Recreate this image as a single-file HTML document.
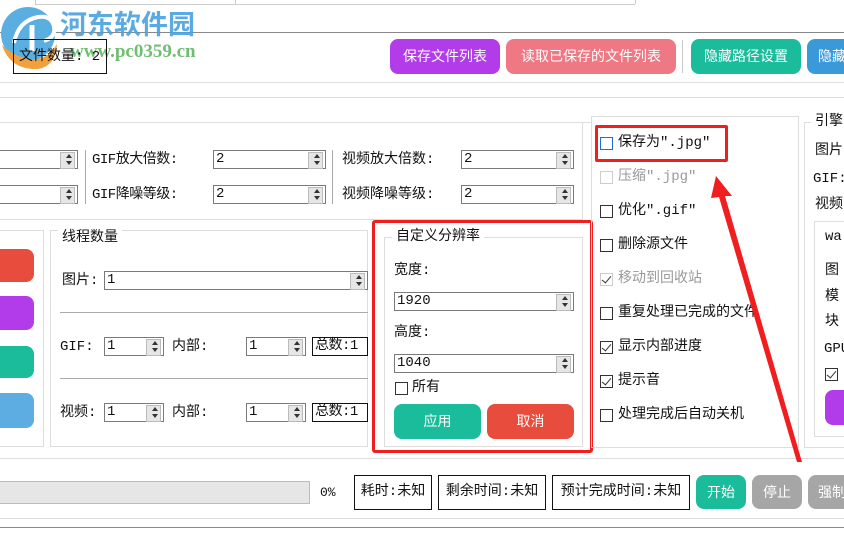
<!DOCTYPE html>
<html><head><meta charset="utf-8"><style>
*{margin:0;padding:0;box-sizing:border-box}
body{width:844px;height:535px;overflow:hidden;background:#fff;position:relative;font-family:"Liberation Mono","Noto Sans CJK SC",monospace;font-size:14px;color:#111}
.a{position:absolute}
.t{position:absolute;white-space:nowrap;line-height:16px}
.hl{position:absolute;height:1px;background:#ddd}
.btn{position:absolute;border-radius:8px;color:#fff;text-align:center;font-size:14px;font-family:"Liberation Sans","Noto Sans CJK SC",sans-serif}
.sp{position:absolute;border:1px solid #7a7a7a;background:#fff;height:19px;font-size:14px;line-height:17px;padding-left:2px}
.sp:after{content:"";position:absolute;right:2px;top:1px;width:13px;height:15px;background:#e6e6e6;border:1px solid #bbb}
.sp i{position:absolute;right:5px;top:3px;width:0;height:0;border-left:3.5px solid transparent;border-right:3.5px solid transparent;border-bottom:4px solid #333;z-index:2}
.sp b{position:absolute;right:5px;top:10px;width:0;height:0;border-left:3.5px solid transparent;border-right:3.5px solid transparent;border-top:4px solid #333;z-index:2}
.grp{position:absolute;border:1px solid #ddd}
.cb{position:absolute;width:13px;height:13px;border:1px solid #333;background:#fff}
.ck:after{content:"";position:absolute;left:3px;top:0px;width:4px;height:8px;border:solid #333;border-width:0 1.5px 1.5px 0;transform:rotate(40deg)}
.box{position:absolute;border:1px solid #111;height:35px;line-height:33px;text-align:center}
</style></head><body>
<div class="hl" style="left:35px;top:4px;width:600px;background:#ccc"></div>
<div class="a" style="left:35px;top:0;width:1px;height:4px;background:#ccc"></div>
<div class="a" style="left:235px;top:0;width:1px;height:4px;background:#ccc"></div>
<div class="a" style="left:635px;top:0;width:1px;height:4px;background:#ccc"></div>
<div class="hl" style="left:0;top:32px;width:844px;background:#888"></div>
<svg class="a" style="left:0;top:5px" width="60" height="66"><path d="M28 2a27 27 0 1 0 0.1 0z" fill="#5aaee0"/><path d="M2 40q8 25 36 24q18-3 19-25q-12 20-33 14q-13-4-22-13z" fill="#f2a03c"/><path d="M14 38q4-22 24-26q14-2 16 10q2 10-10 14" stroke="#fff" stroke-width="4" fill="none"/><path d="M32 20v26" stroke="#fff" stroke-width="5"/></svg>
<div class="t" style="left:60px;top:8px;font-size:27px;line-height:30px;font-weight:bold;color:#4aa3df;font-family:'Noto Sans CJK SC',sans-serif;opacity:.9">河东软件园</div>
<div class="t" style="left:70px;top:42px;font-size:19px;line-height:20px;font-weight:bold;color:#4caf50;font-family:'Liberation Serif',serif;opacity:.8">www.pc0359.cn</div>
<div class="a" style="left:13px;top:39px;width:94px;height:35px;border:1px solid #111"></div>
<div class="t" style="left:19px;top:49px">文件数量: 2</div>
<div class="btn" style="left:390px;top:39px;width:110px;height:35px;line-height:35px;background:#b23ce9">保存文件列表</div>
<div class="btn" style="left:506px;top:39px;width:170px;height:35px;line-height:35px;background:#ee7883">读取已保存的文件列表</div>
<div class="a" style="left:682px;top:40px;width:1px;height:33px;background:#ccc"></div>
<div class="btn" style="left:691px;top:39px;width:110px;height:35px;line-height:35px;background:#1abc9c">隐藏路径设置</div>
<div class="btn" style="left:807px;top:39px;width:60px;height:35px;line-height:35px;background:#3a9ad9;text-align:left;padding-left:11px">隐藏</div>
<div class="hl" style="left:0;top:82px;width:844px"></div>
<div class="hl" style="left:0;top:97px;width:844px"></div>
<div class="hl" style="left:0;top:122px;width:591px"></div>
<div class="grp" style="left:-2px;top:122px;width:585px;height:98px;border-top:none"></div>
<div class="sp" style="left:-2px;top:150px;width:80px"><i></i><b></b></div>
<div class="sp" style="left:-2px;top:185px;width:80px"><i></i><b></b></div>
<div class="a" style="left:85px;top:150px;width:1px;height:54px;background:#aaa"></div>
<div class="t" style="left:92px;top:152px;letter-spacing:-0.5px">GIF放大倍数:</div>
<div class="t" style="left:92px;top:187px;letter-spacing:-0.5px">GIF降噪等级:</div>
<div class="sp" style="left:213px;top:150px;width:113px">2<i></i><b></b></div>
<div class="sp" style="left:213px;top:185px;width:113px">2<i></i><b></b></div>
<div class="a" style="left:332px;top:150px;width:1px;height:54px;background:#aaa"></div>
<div class="t" style="left:342px;top:152px">视频放大倍数:</div>
<div class="t" style="left:342px;top:187px">视频降噪等级:</div>
<div class="sp" style="left:461px;top:150px;width:113px">2<i></i><b></b></div>
<div class="sp" style="left:461px;top:185px;width:113px">2<i></i><b></b></div>
<div class="grp" style="left:-2px;top:230px;width:46px;height:217px"></div>
<div class="btn" style="left:-10px;top:249px;width:44px;height:33px;background:#e74c3c"></div>
<div class="btn" style="left:-10px;top:296px;width:44px;height:34px;background:#b23ce9"></div>
<div class="btn" style="left:-10px;top:346px;width:44px;height:32px;background:#1abc9c"></div>
<div class="btn" style="left:-10px;top:393px;width:44px;height:35px;background:#5dade2"></div>
<div class="grp" style="left:50px;top:230px;width:318px;height:217px"></div>
<div class="t" style="left:58px;top:230px;background:#fff;padding:0 4px">线程数量</div>
<div class="t" style="left:62px;top:273px">图片:</div>
<div class="sp" style="left:104px;top:271px;width:264px">1<i></i><b></b></div>
<div class="hl" style="left:60px;top:312px;width:308px;background:#aaa"></div>
<div class="t" style="left:60px;top:339px">GIF:</div>
<div class="sp" style="left:104px;top:337px;width:60px">1<i></i><b></b></div>
<div class="t" style="left:172px;top:339px">内部:</div>
<div class="sp" style="left:246px;top:337px;width:60px">1<i></i><b></b></div>
<div class="a" style="left:312px;top:337px;width:56px;height:19px;border:1px solid #111;line-height:17px;padding-left:2px;letter-spacing:-0.5px">总数:1</div>
<div class="hl" style="left:60px;top:378px;width:308px;background:#aaa"></div>
<div class="t" style="left:60px;top:405px">视频:</div>
<div class="sp" style="left:104px;top:403px;width:60px">1<i></i><b></b></div>
<div class="t" style="left:172px;top:405px">内部:</div>
<div class="sp" style="left:246px;top:403px;width:60px">1<i></i><b></b></div>
<div class="a" style="left:312px;top:403px;width:56px;height:19px;border:1px solid #111;line-height:17px;padding-left:2px;letter-spacing:-0.5px">总数:1</div>
<div class="grp" style="left:384px;top:237px;width:199px;height:210px"></div>
<div class="t" style="left:392px;top:229px;background:#fff;padding:0 4px">自定义分辨率</div>
<div class="t" style="left:394px;top:263px">宽度:</div>
<div class="sp" style="left:394px;top:292px;width:180px">1920<i></i><b></b></div>
<div class="t" style="left:394px;top:325px">高度:</div>
<div class="sp" style="left:394px;top:354px;width:180px">1040<i></i><b></b></div>
<div class="cb" style="left:395px;top:382px"></div>
<div class="t" style="left:412px;top:380px">所有</div>
<div class="btn" style="left:394px;top:404px;width:87px;height:35px;line-height:35px;background:#1abc9c">应用</div>
<div class="btn" style="left:487px;top:404px;width:87px;height:35px;line-height:35px;background:#e74c3c">取消</div>
<div class="a" style="left:372px;top:220px;width:221px;height:233px;border:3px solid #f01e1e;border-radius:3px"></div>
<div class="grp" style="left:591px;top:116px;width:208px;height:332px"></div>
<div class="cb" style="left:600px;top:137px;border-color:#1a6fc9"></div><div class="t" style="left:618px;top:135px">保存为".jpg"</div>
<div class="cb" style="left:600px;top:171px;border-color:#ccc"></div><div class="t" style="left:618px;top:169px;color:#999">压缩".jpg"</div>
<div class="cb" style="left:600px;top:205px"></div><div class="t" style="left:618px;top:203px">优化".gif"</div>
<div class="cb" style="left:600px;top:239px"></div><div class="t" style="left:618px;top:237px">删除源文件</div>
<div class="cb ck" style="left:600px;top:273px;border-color:#ccc"></div><div class="t" style="left:618px;top:271px;color:#999">移动到回收站</div>
<div class="cb" style="left:600px;top:307px"></div><div class="t" style="left:618px;top:305px">重复处理已完成的文件</div>
<div class="cb ck" style="left:600px;top:341px"></div><div class="t" style="left:618px;top:339px">显示内部进度</div>
<div class="cb ck" style="left:600px;top:375px"></div><div class="t" style="left:618px;top:373px">提示音</div>
<div class="cb" style="left:600px;top:409px"></div><div class="t" style="left:618px;top:407px">处理完成后自动关机</div>
<div class="a" style="left:595px;top:125px;width:133px;height:37px;border:3px solid #f01e1e;border-radius:2px"></div>
<div class="grp" style="left:804px;top:122px;width:50px;height:326px"></div>
<div class="t" style="left:811px;top:114px;background:#fff;padding:0 4px">引擎</div>
<div class="t" style="left:815px;top:143px">图片</div>
<div class="t" style="left:813px;top:171px">GIF:</div>
<div class="t" style="left:815px;top:197px">视频</div>
<div class="grp" style="left:814px;top:221px;width:40px;height:216px"></div>
<div class="t" style="left:825px;top:229px">wa</div>
<div class="t" style="left:825px;top:263px">图</div>
<div class="t" style="left:825px;top:289px">模</div>
<div class="t" style="left:825px;top:314px">块</div>
<div class="t" style="left:824px;top:341px">GPU</div>
<div class="cb ck" style="left:825px;top:368px"></div>
<div class="btn" style="left:825px;top:390px;width:40px;height:35px;background:#b23ce9"></div>
<div class="hl" style="left:0;top:458px;width:844px"></div>
<div class="a" style="left:-2px;top:481px;width:312px;height:23px;background:#e6e6e6;border:1px solid #bcbcbc"></div>
<div class="t" style="left:320px;top:485px;font-size:13px">0%</div>
<div class="box" style="left:354px;top:475px;width:78px">耗时:未知</div>
<div class="box" style="left:438px;top:475px;width:108px">剩余时间:未知</div>
<div class="box" style="left:552px;top:475px;width:138px">预计完成时间:未知</div>
<div class="btn" style="left:696px;top:475px;width:50px;height:34px;line-height:34px;background:#1abc9c">开始</div>
<div class="btn" style="left:752px;top:475px;width:50px;height:34px;line-height:34px;background:#a6a6a6">停止</div>
<div class="btn" style="left:808px;top:475px;width:50px;height:34px;line-height:34px;background:#a6a6a6;text-align:left;padding-left:10px">强制</div>
<div class="hl" style="left:0;top:518px;width:844px"></div>
<div class="hl" style="left:0;top:527px;width:844px;background:#888"></div>
<svg class="a" style="left:0;top:0" width="844" height="535"><path d="M716 176L732 196L725 196L802 462L797 462L719 197L711 198Z" fill="#f01e1e"/></svg>
</body></html>
